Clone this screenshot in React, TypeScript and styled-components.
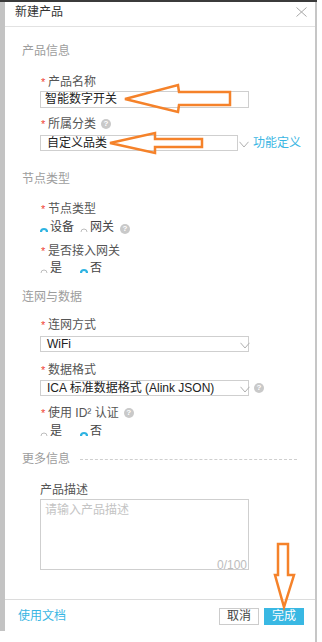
import React from "react";
import styled, { createGlobalStyle } from "styled-components";

const Global = createGlobalStyle`
  html, body { margin: 0; padding: 0; background: #fff; }
  body { font-family: "Liberation Sans", "Noto Sans CJK SC", sans-serif; font-size: 12px; color: #555; }
  * { box-sizing: border-box; }
`;

const Frame = styled.div`
  position: relative;
  display: flex;
  width: 317px;
  border-top: 2px solid #3b3b3b;
`;

const LeftStrip = styled.div`
  flex: none;
  width: 5px;
  height: 629px;
  background: #c3c3c3;
`;

const RightEdge = styled.div`
  flex: none;
  width: 2px;
  height: 640px;
  background: #c6c6c6;
`;

const Panel = styled.div`
  flex: none;
  width: 310px;
  height: 630px;
  display: flex;
  flex-direction: column;
  background: #fff;
`;

const Header = styled.div`
  height: 25px;
  display: flex;
  align-items: flex-start;
  justify-content: space-between;
  padding: 0 8px 0 10px;
  border-bottom: 1px solid #e2e2e2;
`;

const Title = styled.div`
  line-height: 20px;
  font-size: 12px;
  color: #333;
`;

const CloseIcon = styled.svg`
  margin-top: 5px;
  display: block;
`;

const Body = styled.div`
  flex: 1;
  padding: 17px 0 0 17px;
`;

const Section = styled.section<{ $mt?: number }>`
  margin-top: ${(p) => p.$mt ?? 0}px;
`;

const SectionTitle = styled.div<{ $dashed?: boolean }>`
  display: flex;
  align-items: center;
  height: 14px;
  line-height: 14px;
  color: #9d9d9d;
  &::after {
    content: "";
    display: ${(p) => (p.$dashed ? "block" : "none")};
    flex: 1;
    margin: 1px 18px 0 10px;
    border-top: 1px dashed #cfcfcf;
  }
`;

const Item = styled.div<{ $mt: number }>`
  margin-top: ${(p) => p.$mt}px;
  padding-left: 18px;
`;

const Label = styled.div<{ $gap: number }>`
  display: flex;
  align-items: center;
  height: 14px;
  line-height: 14px;
  color: #555;
  margin-bottom: ${(p) => p.$gap}px;
`;

const Star = styled.span`
  color: #f04134;
  width: 7px;
  margin-left: 1px;
  font-size: 11px;
`;

const QMark = styled.span<{ $ml: number }>`
  display: inline-flex;
  align-items: center;
  justify-content: center;
  width: 10px;
  height: 10px;
  border-radius: 50%;
  background: #c9c9c9;
  color: #fff;
  font: bold 8px/10px "Liberation Sans", sans-serif;
  margin-left: ${(p) => p.$ml}px;
  flex: none;
`;

const TextInput = styled.div`
  width: 209px;
  height: 17px;
  border: 1px solid #cfcfcf;
  padding: 0 4px;
  line-height: 15px;
  color: #222;
`;

const SelectRow = styled.div`
  display: flex;
  align-items: center;
`;

const SelectBox = styled.div<{ $w: number }>`
  width: ${(p) => p.$w}px;
  height: 16px;
  border: 1px solid #cfcfcf;
  padding: 0 6px;
  line-height: 14px;
  color: #222;
  white-space: nowrap;
  flex: none;
`;

const Chevron = styled.svg<{ $ml: number }>`
  display: block;
  flex: none;
  margin-left: ${(p) => p.$ml}px;
  margin-top: 3px;
`;

const Link = styled.a`
  color: #39b6e3;
  text-decoration: none;
  font-size: 12px;
  line-height: 14px;
`;

const SideLink = styled(Link)`
  margin-left: 4px;
`;

const RadioRow = styled.div`
  display: flex;
  align-items: flex-start;
  height: 14px;
`;

const Option = styled.label`
  display: flex;
  align-items: flex-end;
  min-width: 40px;
  height: 14px;
  line-height: 13px;
  color: #444;
`;

const RadioSvg = styled.svg`
  display: block;
  flex: none;
  margin: 0 2px 2px 0;
`;

const AreaWrap = styled.div`
  position: relative;
  width: 209px;
  height: 71px;
`;

const TextArea = styled.textarea`
  display: block;
  width: 209px;
  height: 71px;
  border: 1px solid #cfcfcf;
  padding: 3px 4px;
  resize: none;
  font-family: "Liberation Sans", "Noto Sans CJK SC", sans-serif;
  font-size: 12px;
  line-height: 14px;
  color: #222;
  outline: none;
  &::placeholder { color: #c4c4c4; }
`;

const Counter = styled.span`
  position: absolute;
  right: 2px;
  bottom: -1px;
  line-height: 12px;
  color: #bdbdbd;
  font-size: 12px;
`;

const Footer = styled.div`
  height: 33px;
  border-top: 1px solid #dcdcdc;
  display: flex;
  align-items: center;
  justify-content: space-between;
  padding: 0 11px 0 13px;
`;

const Buttons = styled.div`
  display: flex;
  gap: 5px;
`;

const Button = styled.button<{ $primary?: boolean }>`
  width: 40px;
  height: 17px;
  padding: 0;
  font-family: "Liberation Sans", "Noto Sans CJK SC", sans-serif;
  font-size: 12px;
  line-height: 15px;
  border: 1px solid ${(p) => (p.$primary ? "#39b8e3" : "#cccccc")};
  background: ${(p) => (p.$primary ? "#39b8e3" : "#fff")};
  color: ${(p) => (p.$primary ? "#fff" : "#444")};
`;

const Overlay = styled.svg`
  position: absolute;
  left: 0;
  top: -2px;
  pointer-events: none;
`;

const Radio = ({ checked }: { checked?: boolean }) => (
  <RadioSvg width="8" height="5" viewBox="0 0 8 5">
    <path
      d="M1 5 A3 3 0 0 1 7 5"
      fill="none"
      stroke={checked ? "#2db3e2" : "#bdbdbd"}
      strokeWidth={checked ? 2.2 : 1}
    />
  </RadioSvg>
);

const Down = ({ ml }: { ml: number }) => (
  <Chevron $ml={ml} width="10" height="7" viewBox="0 0 10 7">
    <path d="M0.5 0.8 L5 6 L9.5 0.8" fill="none" stroke="#b0b0b0" strokeWidth="1" />
  </Chevron>
);

const Req = ({ children }: { children: React.ReactNode }) => (
  <>
    <Star>*</Star>
    {children}
  </>
);

export default function App() {
  return (
    <>
      <Global />
      <Frame>
        <LeftStrip />
        <Panel>
          <Header>
            <Title>新建产品</Title>
            <CloseIcon width="11" height="10" viewBox="0 0 11 10">
              <path d="M0.5 0.5 L10.5 9.5 M10.5 0.5 L0.5 9.5" stroke="#a8a8a8" strokeWidth="1" />
            </CloseIcon>
          </Header>
          <Body>
            <Section>
              <SectionTitle>产品信息</SectionTitle>
              <Item $mt={17}>
                <Label $gap={2}><Req>产品名称</Req></Label>
                <TextInput>智能数字开关</TextInput>
              </Item>
              <Item $mt={9}>
                <Label $gap={4}><Req>所属分类</Req><QMark $ml={5}>?</QMark></Label>
                <SelectRow>
                  <SelectBox $w={198}>自定义品类</SelectBox>
                  <Down ml={1} />
                  <SideLink href="#">功能定义</SideLink>
                </SelectRow>
              </Item>
            </Section>

            <Section $mt={21}>
              <SectionTitle>节点类型</SectionTitle>
              <Item $mt={16}>
                <Label $gap={4}><Req>节点类型</Req></Label>
                <RadioRow>
                  <Option><Radio checked />设备</Option>
                  <Option><Radio />网关<QMark $ml={6}>?</QMark></Option>
                </RadioRow>
              </Item>
              <Item $mt={10}>
                <Label $gap={3}><Req>是否接入网关</Req></Label>
                <RadioRow>
                  <Option><Radio />是</Option>
                  <Option><Radio checked />否</Option>
                </RadioRow>
              </Item>
            </Section>

            <Section $mt={15}>
              <SectionTitle>连网与数据</SectionTitle>
              <Item $mt={14}>
                <Label $gap={4}><Req>连网方式</Req></Label>
                <SelectRow>
                  <SelectBox $w={209}>WiFi</SelectBox>
                  <Down ml={-9} />
                </SelectRow>
              </Item>
              <Item $mt={11}>
                <Label $gap={3}><Req>数据格式</Req></Label>
                <SelectRow>
                  <SelectBox $w={209}>ICA 标准数据格式 (Alink JSON)</SelectBox>
                  <Down ml={-9} />
                  <QMark $ml={4}>?</QMark>
                </SelectRow>
              </Item>
              <Item $mt={10}>
                <Label $gap={4}><Req>使用 ID² 认证</Req><QMark $ml={5}>?</QMark></Label>
                <RadioRow>
                  <Option><Radio />是</Option>
                  <Option><Radio checked />否</Option>
                </RadioRow>
              </Item>
            </Section>

            <Section $mt={14}>
              <SectionTitle $dashed>更多信息</SectionTitle>
              <Item $mt={17}>
                <Label $gap={2}>产品描述</Label>
                <AreaWrap>
                  <TextArea placeholder="请输入产品描述" />
                  <Counter>0/100</Counter>
                </AreaWrap>
              </Item>
            </Section>
          </Body>
          <Footer>
            <Link href="#">使用文档</Link>
            <Buttons>
              <Button>取消</Button>
              <Button $primary>完成</Button>
            </Buttons>
          </Footer>
        </Panel>
        <RightEdge />
        <Overlay width="322" height="642" viewBox="0 0 322 642">
          <g fill="none" stroke="#f5822a" strokeWidth="2.5" strokeLinejoin="miter">
            <polygon points="125,99 178,85 179,92 230,92 230,105 179,105 178,112" />
            <polygon points="110,143 155,133 155,139 202,139 202,147 155,147 155,153" />
            <polygon points="278,544 288,544 288,575 294,575 284,607 275,575 278,575" />
          </g>
        </Overlay>
      </Frame>
    </>
  );
}
